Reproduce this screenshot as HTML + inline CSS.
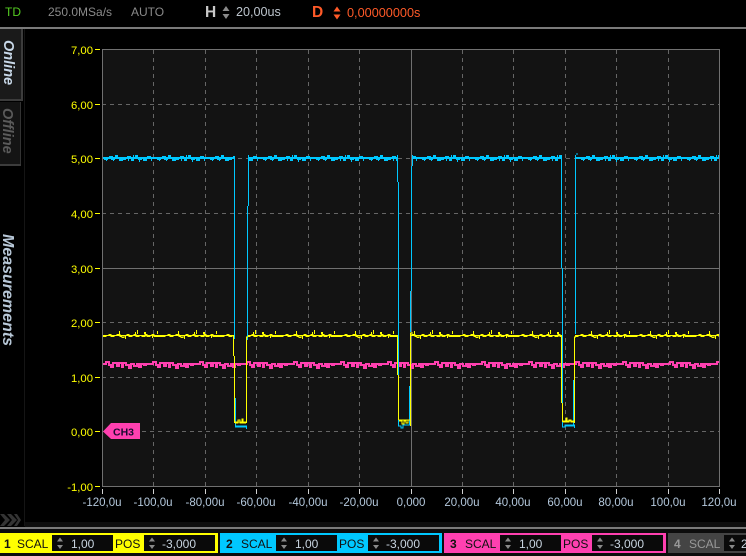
<!DOCTYPE html>
<html><head><meta charset="utf-8"><title>Scope</title>
<style>
html,body{margin:0;padding:0;background:#000;width:746px;height:556px;overflow:hidden}
svg{display:block}
text{font-family:"Liberation Sans",Arial,sans-serif;font-size:12px;white-space:pre}
.y{fill:#ffff00;font-size:11.3px;text-anchor:end}
.x{fill:#b4c8dc;font-size:11.5px;text-anchor:middle}
.g{stroke:#666;stroke-width:1;stroke-dasharray:4 4;fill:none}
.s{stroke:#707070;stroke-width:1;fill:none}
.c{stroke:#00c8ff;stroke-width:1;fill:none}
.l{stroke:#ffff00;stroke-width:1;fill:none}
.v{fill:#c8d4e0}
</style></head><body>
<svg width="746" height="556" viewBox="0 0 746 556" xmlns="http://www.w3.org/2000/svg">
<defs>
<pattern id="pc" patternUnits="userSpaceOnUse" x="103" y="150" width="53" height="14">
<path shape-rendering="crispEdges" fill="#00c8ff" d="M0 7h53v2H0z"/>
<path shape-rendering="crispEdges" fill="none" stroke="#00c8ff" stroke-width="2" d="M0 8h2v1h2v-1h3v-1h2v2h2v-1h2v-2h1v2h3v2h2v-2h2v1h1v-1h3v-1h2v1h2v2h1v-2h3v-2h1v2h2v1h2v-1h3v2h2v-2h2v-1h2v1h3h3"/>
<path shape-rendering="crispEdges" fill="#00c8ff" d="M3 9h1v2H3z M10 9h1v2h-1z M17 9h1v2h-1z M25 9h1v2h-1z M36 9h1v3h-1z M42 9h2v2h-2z M48 9h1v2h-1z M14 5h1v2h-1z M30 5h1v2h-1z"/>
</pattern>
<pattern id="py" patternUnits="userSpaceOnUse" x="103" y="327" width="59" height="16">
<path shape-rendering="crispEdges" fill="#ffff00" d="M0 8h59v1H0z"/>
<path shape-rendering="crispEdges" fill="none" stroke="#ffff00" stroke-width="1" d="M0 9.500h3v-1h3v-1h2v2h3v-1h3v-1h3v2h2v1h2v-2h3v-1h2v2h3v-1h2v-1h2v2h3v-1h3v1h3v-2h2v2h3v-1h2v-1h2v2h3h5"/>
<path shape-rendering="crispEdges" fill="#ffff00" d="M16 4h1v3h-1z M22 9h1v3h-1z M32 5h1v2h-1z M34 3h1v4h-1z M41 5h2v2h-2z M49 9h1v2h-1z M54 4h1v3h-1z"/>
</pattern>
<pattern id="pp" patternUnits="userSpaceOnUse" x="103" y="355" width="47" height="18">
<path shape-rendering="crispEdges" fill="none" stroke="#ff40b0" stroke-width="2" d="M0 9h3v-2h3v3h2v2h2v-4h4v3h2v-3h3v4h1v-4h3v2h3v3h2v-4h3v2h3v-2h2v3h2v-3h3v1h2v-1h4"/>
</pattern>
</defs>

<rect width="746" height="556" fill="#000"/>

<!-- top status -->
<text x="5" y="16" fill="#55cc22">TD</text>
<text x="48" y="16" fill="#8a8a8a">250.0MSa/s</text>
<text x="131" y="16" fill="#8a8a8a">AUTO</text>
<text x="205" y="17" fill="#c8c8c8" font-weight="bold" style="font-size:15.5px">H</text>
<path fill="#8a8a8a" d="M226 6l3.500 5h-7z M226 19l3.500-5h-7z"/>
<text x="236" y="16" fill="#bcc4cc" style="font-size:12.600px">20,00us</text>
<text x="312" y="17" fill="#ff5a28" font-weight="bold" style="font-size:15.5px">D</text>
<path fill="#ff5a28" d="M337 6.500l3.500 5h-7z M337 19.500l3.500-5h-7z"/>
<text x="347" y="17" fill="#ff5a28" style="font-size:12.700px">0,00000000s</text>
<rect x="0" y="27" width="746" height="2" fill="#7a7a7a"/>

<!-- left tabs -->
<rect x="0" y="29" width="22" height="71" fill="#1a1a1a"/>
<rect x="21" y="29" width="2" height="71" fill="#3c3c3c"/>
<rect x="0" y="99" width="23" height="2" fill="#3c3c3c"/>
<rect x="0" y="102" width="20" height="63" fill="#141414"/>
<rect x="20" y="102" width="1" height="63" fill="#333"/>
<rect x="0" y="164" width="21" height="2" fill="#3c3c3c"/>
<rect x="24" y="29" width="1" height="497" fill="#151515"/>
<text transform="translate(4 40) rotate(90)" fill="#c8d8e8" font-weight="bold" font-style="italic" style="font-size:14.5px">Online</text>
<text transform="translate(3 108) rotate(90)" fill="#5a5a5a" font-weight="bold" font-style="italic" style="font-size:14.5px">Offline</text>
<text transform="translate(3 234) rotate(90)" fill="#b8c8d8" font-weight="bold" font-style="italic" style="font-size:16px">Measurements</text>
<path fill="#343434" d="M0 514h4l6 6-6 6H0l5-6z M7 514h4l6 6-6 6H7l5-6z M14 514h3l4 6-4 6h-3l4-6z"/>
<rect x="25" y="522" width="721" height="5" fill="#0e0e0e"/>

<!-- plot -->
<rect x="102" y="49" width="618" height="437" fill="#131313"/>
<g shape-rendering="crispEdges">
<path class="g" d="M153.500 50V486 M205.500 50V486 M256.500 50V486 M308.500 50V486 M359.500 50V486 M462.500 50V486 M513.500 50V486 M565.500 50V486 M616.500 50V486 M668.500 50V486"/>
<path class="g" d="M102 104.500H720 M102 158.500H720 M102 213.500H720 M102 322.500H720 M102 377.500H720 M102 431.500H720"/>
<path class="s" d="M102.500 49.500H719.500V486.500H102.500Z M411.500 49V486 M102 268.500H720"/>
<!-- y ticks -->
<path stroke="#ffff00" fill="none" d="M95 49.500h5 M95 104.500h5 M95 158.500h5 M95 213.500h5 M95 268.500h5 M95 322.500h5 M95 377.500h5 M95 431.500h5 M95 486.500h5"/>
<!-- x ticks -->
<path stroke="#d0d0d0" fill="none" d="M102.500 489v5 M153.500 489v5 M205.500 489v5 M256.500 489v5 M308.500 489v5 M359.500 489v5 M411.500 489v5 M462.500 489v5 M513.500 489v5 M565.500 489v5 M616.500 489v5 M668.500 489v5 M719.500 489v5"/>
</g>
<text class="y" x="93" y="54">7,00</text>
<text class="y" x="93" y="109">6,00</text>
<text class="y" x="93" y="163">5,00</text>
<text class="y" x="93" y="218">4,00</text>
<text class="y" x="93" y="273">3,00</text>
<text class="y" x="93" y="327">2,00</text>
<text class="y" x="93" y="382">1,00</text>
<text class="y" x="93" y="436">0,00</text>
<text class="y" x="93" y="491">-1,00</text>
<text class="x" x="102" y="506">-120,0u</text>
<text class="x" x="153" y="506">-100,0u</text>
<text class="x" x="205" y="506">-80,00u</text>
<text class="x" x="256" y="506">-60,00u</text>
<text class="x" x="308" y="506">-40,00u</text>
<text class="x" x="359" y="506">-20,00u</text>
<text class="x" x="411" y="506">0,000</text>
<text class="x" x="462" y="506">20,00u</text>
<text class="x" x="513" y="506">40,00u</text>
<text class="x" x="565" y="506">60,00u</text>
<text class="x" x="616" y="506">80,00u</text>
<text class="x" x="668" y="506">100,0u</text>
<text class="x" x="719" y="506">120,0u</text>

<!-- pink trace -->
<rect x="103" y="355" width="616" height="18" fill="url(#pp)"/>
<!-- yellow trace -->
<rect x="103" y="327" width="131" height="16" fill="url(#py)"/>
<rect x="247" y="327" width="151" height="16" fill="url(#py)"/>
<rect x="411" y="327" width="151" height="16" fill="url(#py)"/>
<rect x="575" y="327" width="144" height="16" fill="url(#py)"/>
<!-- cyan trace -->
<rect x="103" y="150" width="131" height="14" fill="url(#pc)"/>
<rect x="249" y="150" width="149" height="14" fill="url(#pc)"/>
<rect x="413" y="150" width="149" height="14" fill="url(#pc)"/>
<rect x="576" y="150" width="143" height="14" fill="url(#pc)"/>

<g shape-rendering="crispEdges">
<!-- pulse 1 -->
<path class="c" d="M234.500 156V339 M248.500 155V206 M247.500 206V340"/>
<path class="c" d="M235.500 398V426H246.500V429"/>
<path class="c" d="M235 427H246"/>
<path class="l" d="M233.500 336V356 M234.500 356V423 M246.500 423V337H248"/>
<path class="l" d="M235 423h3v-3h2v3h2v-4h1v4h3 M235 422h11"/>
<!-- pulse 2 -->
<path class="c" d="M397.500 155V182 M398.500 182V375 M412.500 155V166 M411.500 166V291 M410.500 291V332"/>
<path class="c" d="M398.500 420V426H401V428H403V425H410.500 M409.500 386V425"/>
<path class="l" d="M397.500 336V375 M398.500 375V420 M410.500 426V333H413"/>
<path class="l" d="M399 421h3v3h2v-3h2v2h2v-3h2 M399 420h10"/>
<!-- pulse 3 -->
<path class="c" d="M561.500 156V268 M562.500 268V424 M575.500 155V334 M576 154H578"/>
<path class="c" d="M562.500 424V427H565V425H574.500V428 M573.500 380V425 M565 426H574"/>
<path class="l" d="M561.500 337V403 M562.500 403V422 M574.500 423V337H576"/>
<path class="l" d="M563 422h3v-4h1v4h2v-2h2v2h3 M563 421h11"/>
</g>

<!-- CH3 marker -->
<path fill="#ff40b0" d="M103 431.500L111 423H140V439H111Z"/>
<text x="113" y="435.500" fill="#1a0a30" font-weight="bold" style="font-size:10.500px">CH3</text>

<!-- bottom bar -->
<rect x="0" y="527" width="746" height="2" fill="#7a7a7a"/>
<rect x="0" y="529" width="746" height="27" fill="#0c0c0c"/>

<!-- CH1 -->
<rect x="0" y="533" width="218" height="20" fill="#ffff00"/>
<rect x="52" y="535" width="61" height="16" fill="#0a0a0a"/>
<rect x="144" y="535" width="71" height="16" fill="#0a0a0a"/>
<text x="4" y="548" fill="#111" font-weight="bold">1</text>
<text x="17" y="548" fill="#111">SCAL</text>
<text x="115" y="548" fill="#111">POS</text>
<path fill="#8a8a8a" d="M60 537.500l3 4h-6z M60 549l3-4h-6z M152 537.500l3 4h-6z M152 549l3-4h-6z"/>
<text x="71" y="548" fill="#c8d4e0">1,00</text>
<text x="162" y="548" fill="#c8d4e0">-3,000</text>

<!-- CH2 -->
<rect x="220" y="533" width="222" height="20" fill="#00c8ff"/>
<rect x="276" y="535" width="61" height="16" fill="#0a0a0a"/>
<rect x="368" y="535" width="71" height="16" fill="#0a0a0a"/>
<text x="226" y="548" fill="#111" font-weight="bold">2</text>
<text x="241" y="548" fill="#111">SCAL</text>
<text x="339" y="548" fill="#111">POS</text>
<path fill="#8a8a8a" d="M284 537.500l3 4h-6z M284 549l3-4h-6z M376 537.500l3 4h-6z M376 549l3-4h-6z"/>
<text x="295" y="548" fill="#c8d4e0">1,00</text>
<text x="386" y="548" fill="#c8d4e0">-3,000</text>

<!-- CH3 -->
<rect x="444" y="533" width="222" height="20" fill="#ff40b0"/>
<rect x="500" y="535" width="61" height="16" fill="#0a0a0a"/>
<rect x="592" y="535" width="71" height="16" fill="#0a0a0a"/>
<text x="450" y="548" fill="#111" font-weight="bold">3</text>
<text x="465" y="548" fill="#111">SCAL</text>
<text x="563" y="548" fill="#111">POS</text>
<path fill="#8a8a8a" d="M508 537.500l3 4h-6z M508 549l3-4h-6z M600 537.500l3 4h-6z M600 549l3-4h-6z"/>
<text x="519" y="548" fill="#c8d4e0">1,00</text>
<text x="610" y="548" fill="#c8d4e0">-3,000</text>

<!-- CH4 -->
<rect x="668" y="533" width="78" height="20" fill="#444"/>
<rect x="724" y="535" width="22" height="16" fill="#0a0a0a"/>
<text x="674" y="548" fill="#999" font-weight="bold">4</text>
<text x="689" y="548" fill="#999">SCAL</text>
<path fill="#8a8a8a" d="M732 537.500l3 4h-6z M732 549l3-4h-6z"/>
<text x="741" y="548" fill="#c8d4e0">2</text>
</svg>
</body></html>
